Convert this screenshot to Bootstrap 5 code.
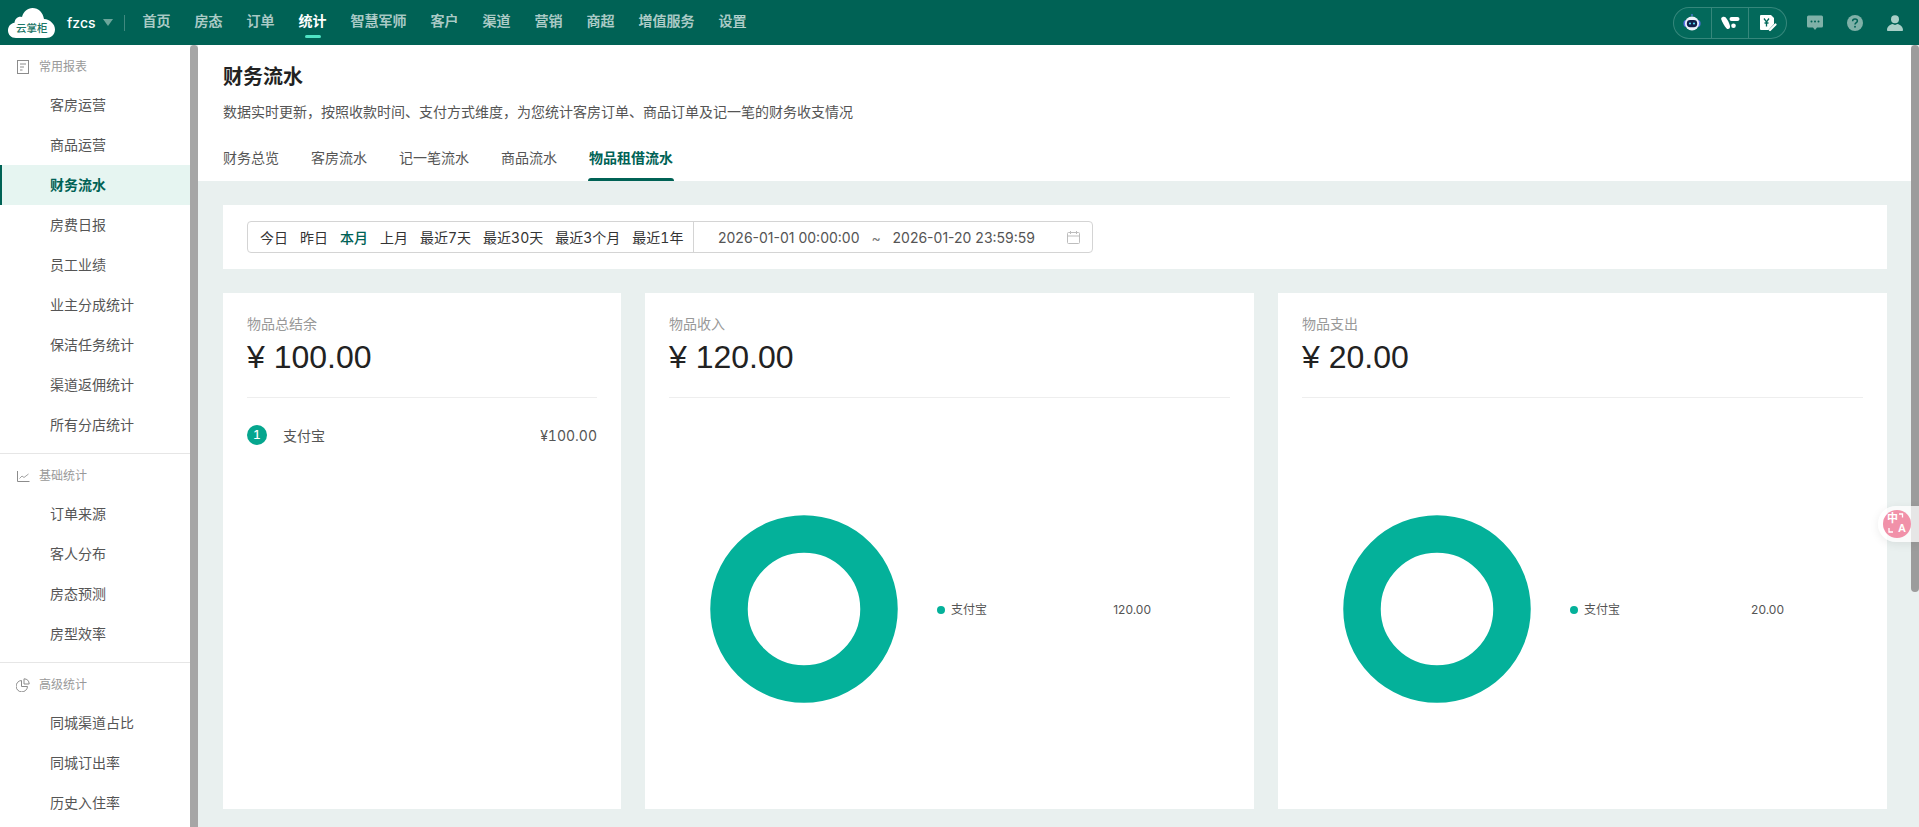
<!DOCTYPE html>
<html lang="zh-CN">
<head>
<meta charset="utf-8">
<title>财务流水</title>
<link rel="stylesheet" href="https://cdn.jsdelivr.net/npm/bootstrap@5.3.0/dist/css/bootstrap.min.css">
<style>
html,body{height:100%;overflow:hidden}
body{font-family:"Liberation Sans","Noto Sans CJK SC",sans-serif;font-size:14px;color:#333;background:#e9f0ef}
.app-top{height:45px;background:#006255;flex:none}
.brand-cloud{width:47px;height:30px;margin-left:8px;flex:none;position:relative}
.brand-cloud svg{display:block}
.brand-name{position:absolute;left:8px;top:14px;width:32px;font-size:10.5px;line-height:13px;font-weight:500;color:#1d7767;white-space:nowrap}
.hotel{font-family:"Inter","Noto Sans CJK SC",sans-serif;color:#fff;font-size:14px;font-weight:500;margin-left:12px;line-height:20px}
.caret-down{width:0;height:0;border:5px solid transparent;border-top:7px solid #6ca69b;border-bottom:0;margin-left:7px}
.top-sep{width:1px;height:16px;background:rgba(255,255,255,.25);margin:0 0 0 11px}
.top-nav{margin-left:18px;gap:24px}
.top-nav .nav-link{padding:0;height:45px;line-height:43px;color:rgba(255,255,255,.68);font-weight:500;position:relative;font-size:14px;-webkit-text-stroke:.2px rgba(255,255,255,.68)}
.top-nav .nav-link.active{color:#fff;font-weight:700;-webkit-text-stroke:0}
.top-nav .nav-link.active::after{content:"";position:absolute;left:6px;width:16px;top:35px;height:3px;border-radius:2px;background:#4fe3c4}
.capsule{width:114px;height:32px;margin-right:20px;border:1px solid rgba(255,255,255,.2);border-radius:16px;background:#03695b;overflow:hidden}
.capsule>div{height:100%;flex:1 1 0;border-right:1px solid rgba(255,255,255,.2)}
.capsule>div:last-child{border-right:0}
.top-tools{gap:24px;margin-right:16px}
.side-wrap{width:198px;flex:none}
.side-menu{width:190px;background:#fff;overflow:hidden}
.side-bar{width:8px;background:#a6a6a6;border-radius:4px 4px 0 0}
.menu-head{height:40px;padding:3px 0 0 17px;font-size:12px;color:#999;gap:10px}
.menu-head svg{flex:none}
.menu-head .icon-wide{margin:0 -1px}
.menu-item{height:40px;line-height:40px;padding:0 0 0 50px;color:#555;font-size:14px;white-space:nowrap}
.menu-item.active{background:#e6f5f1;color:#006255;font-weight:700;box-shadow:inset 2px 0 0 #006255}
.menu-group{padding-bottom:8px;border-bottom:1px solid #e6e6e6}
.menu-group:last-child{border-bottom:0}
.main-pane{background:#e9f0ef}
.main-scroll{width:8px;flex:none}
.main-thumb{width:8px;height:547px;background:#9c9c9c;border-radius:4px}
.page-head{height:136px;padding:18px 0 0 25px;background:#fff;flex:none}
.page-title{font-size:20px;line-height:28px;font-weight:700;color:#222;margin:0}
.page-desc{line-height:22px;margin:10px 0 0;color:#555}
.tabs-row{gap:32px;margin-top:13px}
.tabs-row .nav-link{padding:0;height:45px;line-height:45px;color:#555;position:relative}
.tabs-row .nav-link.active{color:#006255;font-weight:700}
.tabs-row .nav-link.active::after{content:"";position:absolute;left:-1px;right:-1px;bottom:0;height:3px;border-radius:3px 3px 0 0;background:#006255}
.content-area{padding:24px 24px 0 25px}
.filter-panel{height:64px;padding:16px 24px;background:#fff;border-radius:0}
.filter-box{width:846px;height:32px;border:1px solid #d4d4d4;border-radius:4px;font-family:"Inter","Noto Sans CJK SC",sans-serif}
.presets{padding:0 0 0 12px;gap:12px;border-right:1px solid #d4d4d4;height:100%;width:446px;color:#333;white-space:nowrap;flex:none;font-variant-numeric:tabular-nums}
.presets .on{color:#006255;font-weight:500}
.date-range{padding-left:24px;color:#555;flex:1;white-space:nowrap}
.date-range .tilde{width:33px;text-align:center;color:#777}
.date-range svg{margin-left:32px}
.stat-grid{display:grid;grid-template-columns:398fr 609fr 609fr;gap:24px;margin-top:24px;height:516px}
.stat-card{padding:20px 24px 0}
.stat-label{line-height:22px;color:#999}
.stat-value{font-size:32px;line-height:44px;color:#222}
.stat-rule{height:1px;background:#eee;margin-top:18px;flex:none}
.pay-row{margin-top:26px;height:22px;color:#555;font-family:"Inter","Noto Sans CJK SC",sans-serif;font-variant-numeric:tabular-nums}
.pay-no{width:20px;height:20px;border-radius:50%;background:#05a68e;color:#fff;font-size:12px;font-weight:500;margin-right:16px;flex:none}
.chart-box{padding:11px 0 0 41px}
.chart-box svg{flex:none}
.legend-row{margin:2px 0 0 39px;width:214px;font-size:12px;color:#555;font-family:"Inter","Noto Sans CJK SC",sans-serif}
.legend-dot{width:8px;height:8px;border-radius:50%;background:#04b19a;margin-right:6px}
.translate-pill{position:absolute;right:0;top:506px;width:41px;height:36px;border-radius:18px 0 0 18px;background:rgba(255,255,255,.75);box-shadow:0 2px 10px rgba(0,0,0,.08)}
.translate-dot{position:absolute;left:5px;top:4px;width:28px;height:28px;border-radius:50%;background:#f191a9;color:#fff;font-weight:700}
.translate-dot span{position:absolute;line-height:11px}
.translate-dot svg{position:absolute;left:0;top:0}
.t-zh{left:4px;top:3px;font-size:11px}
.t-en{left:15px;top:13px;font-size:11px}
</style>
</head>
<body class="d-flex flex-column">
<header class="app-top d-flex align-items-center">
  <div class="brand-cloud">
    <svg width="47" height="30" viewBox="0 0 47 30"><path fill="#fff" d="M8 30C3 30 0 26.500 0 22.500C0 18.500 2.500 15.500 6.500 14.800C7 10.500 10 8 14 9C15.500 3.500 19.500 0 24.500 0C30.500 0 35 4.500 36 11C42 11.500 47 16 47 21.500C47 26.500 43 30 38 30Z"/></svg>
    <span class="brand-name">云掌柜</span>
  </div>
  <span class="hotel">fzcs</span><span class="caret-down"></span><span class="top-sep"></span>
  <nav class="nav top-nav flex-nowrap">
    <a class="nav-link" href="#">首页</a><a class="nav-link" href="#">房态</a><a class="nav-link" href="#">订单</a><a class="nav-link active" href="#">统计</a><a class="nav-link" href="#">智慧军师</a><a class="nav-link" href="#">客户</a><a class="nav-link" href="#">渠道</a><a class="nav-link" href="#">营销</a><a class="nav-link" href="#">商超</a><a class="nav-link" href="#">增值服务</a><a class="nav-link" href="#">设置</a>
  </nav>
  <div class="ms-auto d-flex align-items-center">
    <div class="capsule d-flex">
      <div class="d-flex align-items-center justify-content-center">
        <svg width="20" height="20" viewBox="0 0 20 20"><path d="M10 1v2" stroke="#5f7df0" stroke-width="1.2"/><rect x="1.500" y="7" width="17" height="7" rx="3" fill="#5a6fe8"/><circle cx="10" cy="10.500" r="7" fill="#eef2fb"/><rect x="4.800" y="7" width="10.400" height="7.200" rx="3.400" fill="#12204a"/><circle cx="8" cy="10.500" r="1.100" fill="#53d8f2"/><circle cx="12" cy="10.500" r="1.100" fill="#53d8f2"/></svg>
      </div>
      <div class="d-flex align-items-center justify-content-center">
        <svg width="19" height="14" viewBox="0 0 19 14"><path fill="#fff" d="M.3 2.200C.8 .6 3.500 .2 4.800 1.500C6.800 4 8.200 7 9 10C9.500 12.500 7.200 13.900 5.600 12.500C3.300 9.800 1.300 6.500 .3 3.500Z"/><rect x="8.500" y="1" width="10" height="4" rx="2" fill="#fff"/><circle cx="12.500" cy="9.700" r="2.300" fill="#fff"/></svg>
      </div>
      <div class="d-flex align-items-center justify-content-center">
        <svg width="18" height="18" viewBox="0 0 18 18"><path fill="#fff" d="M2 1H12L15 4V10L9.500 16H2A1 1 0 0 1 1 15V2A1 1 0 0 1 2 1Z"/><path d="M5 4.500L7.500 8L10 4.500M7.500 8V12.500M5.500 9H9.500" fill="none" stroke="#03695b" stroke-width="1.300"/><path d="M11 16L16.500 10.500" stroke="#fff" stroke-width="2.200" stroke-linecap="round"/></svg>
      </div>
    </div>
    <div class="top-tools d-flex align-items-center">
      <svg width="16" height="16" viewBox="0 0 16 16"><path fill="#7fb1a8" d="M1.500 .5H14.500A1.500 1.500 0 0 1 16 2V11A1.500 1.500 0 0 1 14.500 12.500H10L8 15L6 12.500H1.500A1.500 1.500 0 0 1 0 11V2A1.500 1.500 0 0 1 1.500 .5Z"/><circle cx="4.500" cy="6.500" r="1" fill="#006255"/><circle cx="8" cy="6.500" r="1" fill="#006255"/><circle cx="11.500" cy="6.500" r="1" fill="#006255"/></svg>
      <svg width="16" height="16" viewBox="0 0 16 16"><circle cx="8" cy="8" r="8" fill="#7fb1a8"/><path d="M5.600 6.200C5.600 4.800 6.700 4 8 4C9.400 4 10.400 4.800 10.400 6C10.400 7.600 8 7.700 8 9.500" fill="none" stroke="#006255" stroke-width="1.500"/><circle cx="8" cy="11.800" r=".95" fill="#006255"/></svg>
      <svg width="16" height="16" viewBox="0 0 16 16"><circle cx="8" cy="4.200" r="4" fill="#a8cfc7"/><path fill="#a8cfc7" d="M0 15C0 11.500 3 9.500 5.500 9L8 10L10.500 9C13 9.500 16 11.500 16 15C16 15.600 15.500 16 15 16H1C.5 16 0 15.600 0 15Z"/></svg>
    </div>
  </div>
</header>
<div class="d-flex flex-grow-1 overflow-hidden">
  <div class="side-wrap d-flex">
    <aside class="side-menu">
      <div class="menu-group">
        <div class="menu-head d-flex align-items-center"><svg width="12" height="14" viewBox="0 0 12 14" fill="none" stroke="#8c8c8c"><rect x=".5" y=".5" width="11" height="13"/><path d="M3 4H9M3 7H7M3 10H5.500"/></svg>常用报表</div>
        <div class="menu-item">客房运营</div>
        <div class="menu-item">商品运营</div>
        <div class="menu-item active">财务流水</div>
        <div class="menu-item">房费日报</div>
        <div class="menu-item">员工业绩</div>
        <div class="menu-item">业主分成统计</div>
        <div class="menu-item">保洁任务统计</div>
        <div class="menu-item">渠道返佣统计</div>
        <div class="menu-item">所有分店统计</div>
      </div>
      <div class="menu-group">
        <div class="menu-head d-flex align-items-center"><svg width="14" height="14" viewBox="0 0 14 14" class="icon-wide" fill="none" stroke="#8c8c8c"><path d="M1.500 2V12.500H13.500"/><path d="M3.500 9.500L6 7L8 8.500L12.500 5" stroke-width=".8"/></svg>基础统计</div>
        <div class="menu-item">订单来源</div>
        <div class="menu-item">客人分布</div>
        <div class="menu-item">房态预测</div>
        <div class="menu-item">房型效率</div>
      </div>
      <div class="menu-group">
        <div class="menu-head d-flex align-items-center"><svg width="14" height="14" viewBox="0 0 14 14" class="icon-wide" fill="none" stroke="#8c8c8c"><path d="M5.500 2.500A5.700 5.700 0 1 0 11.500 8.500H5.500Z"/><path d="M8 .8A5.500 5.500 0 0 1 13.200 6H8Z"/></svg>高级统计</div>
        <div class="menu-item">同城渠道占比</div>
        <div class="menu-item">同城订出率</div>
        <div class="menu-item">历史入住率</div>
      </div>
    </aside>
    <div class="side-bar"></div>
  </div>
  <main class="main-pane flex-grow-1 d-flex flex-column overflow-hidden">
    <section class="page-head">
      <h1 class="page-title">财务流水</h1>
      <p class="page-desc">数据实时更新，按照收款时间、支付方式维度，为您统计客房订单、商品订单及记一笔的财务收支情况</p>
      <nav class="nav tabs-row">
        <a class="nav-link" href="#">财务总览</a><a class="nav-link" href="#">客房流水</a><a class="nav-link" href="#">记一笔流水</a><a class="nav-link" href="#">商品流水</a><a class="nav-link active" href="#">物品租借流水</a>
      </nav>
    </section>
    <section class="content-area">
      <div class="filter-panel">
        <div class="filter-box d-flex align-items-center">
          <div class="presets d-flex align-items-center"><span>今日</span><span>昨日</span><span class="on">本月</span><span>上月</span><span>最近7天</span><span>最近30天</span><span>最近3个月</span><span>最近1年</span></div>
          <div class="date-range d-flex align-items-center"><span>2026-01-01 00:00:00</span><span class="tilde">~</span><span>2026-01-20 23:59:59</span>
            <svg width="13" height="13" viewBox="0 0 13 13" fill="none" stroke="#bdbdbd"><rect x=".5" y="1.500" width="12" height="11" rx="1"/><path d="M.5 5H12.500M3.500 0V3M9.500 0V3"/></svg>
          </div>
        </div>
      </div>
      <div class="stat-grid">
        <div class="card border-0 rounded-0 stat-card">
          <div class="stat-label">物品总结余</div>
          <div class="stat-value">¥ 100.00</div>
          <div class="stat-rule"></div>
          <div class="pay-row d-flex align-items-center"><span class="pay-no d-flex align-items-center justify-content-center">1</span><span>支付宝</span><span class="ms-auto">¥100.00</span></div>
        </div>
        <div class="card border-0 rounded-0 stat-card">
          <div class="stat-label">物品收入</div>
          <div class="stat-value">¥ 120.00</div>
          <div class="stat-rule"></div>
          <div class="chart-box d-flex align-items-center flex-grow-1">
            <svg width="188" height="188" viewBox="0 0 188 188"><circle cx="94" cy="94" r="75" fill="none" stroke="#04b19a" stroke-width="37.500"/></svg>
            <div class="legend-row d-flex align-items-center"><span class="legend-dot"></span><span>支付宝</span><span class="ms-auto">120.00</span></div>
          </div>
        </div>
        <div class="card border-0 rounded-0 stat-card">
          <div class="stat-label">物品支出</div>
          <div class="stat-value">¥ 20.00</div>
          <div class="stat-rule"></div>
          <div class="chart-box d-flex align-items-center flex-grow-1">
            <svg width="188" height="188" viewBox="0 0 188 188"><circle cx="94" cy="94" r="75" fill="none" stroke="#04b19a" stroke-width="37.500"/></svg>
            <div class="legend-row d-flex align-items-center"><span class="legend-dot"></span><span>支付宝</span><span class="ms-auto">20.00</span></div>
          </div>
        </div>
      </div>
    </section>
  </main>
  <div class="main-scroll"><div class="main-thumb"></div></div>
</div>
<div class="translate-pill"><div class="translate-dot"><svg width="28" height="28" viewBox="0 0 28 28" fill="none" stroke="#fff" stroke-width="1.300"><path d="M16 4H19.500V7.500"/><path d="M6 18V22H10"/></svg><span class="t-zh">中</span><span class="t-en">A</span></div></div>
<script src="https://cdn.jsdelivr.net/npm/bootstrap@5.3.0/dist/js/bootstrap.bundle.min.js"></script>
</body>
</html>
